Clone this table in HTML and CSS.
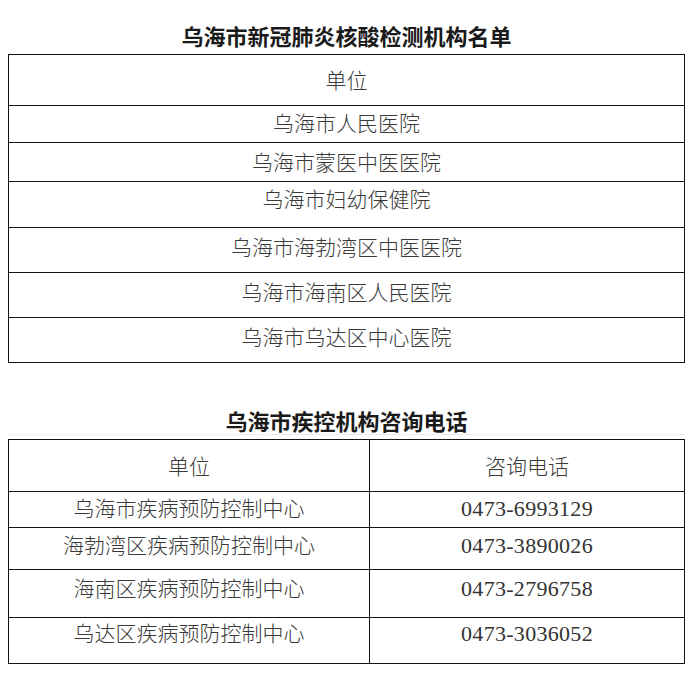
FILE: index.html
```html
<!DOCTYPE html>
<html lang="zh-CN">
<head>
<meta charset="utf-8">
<title>乌海市新冠肺炎核酸检测机构名单</title>
<link rel="stylesheet" href="styles.css">
</head>
<body>
<div class="page">
  <h2 class="title title-first">乌海市新冠肺炎核酸检测机构名单</h2>
  <div class="table">
    <div class="row r1-h"><div class="cell">单位</div></div>
    <div class="row r1-a"><div class="cell">乌海市人民医院</div></div>
    <div class="row r1-b"><div class="cell">乌海市蒙医中医医院</div></div>
    <div class="row r1-c"><div class="cell">乌海市妇幼保健院</div></div>
    <div class="row r1-d"><div class="cell">乌海市海勃湾区中医医院</div></div>
    <div class="row r1-d"><div class="cell">乌海市海南区人民医院</div></div>
    <div class="row r1-d"><div class="cell">乌海市乌达区中心医院</div></div>
  </div>

  <h2 class="title title-second">乌海市疾控机构咨询电话</h2>
  <div class="table">
    <div class="row two r2-h"><div class="cell left">单位</div><div class="cell">咨询电话</div></div>
    <div class="row two r2-a"><div class="cell left">乌海市疾病预防控制中心</div><div class="cell num">0473-6993129</div></div>
    <div class="row two r2-b"><div class="cell left">海勃湾区疾病预防控制中心</div><div class="cell num">0473-3890026</div></div>
    <div class="row two r2-c"><div class="cell left">海南区疾病预防控制中心</div><div class="cell num">0473-2796758</div></div>
    <div class="row two r2-d"><div class="cell left">乌达区疾病预防控制中心</div><div class="cell num">0473-3036052</div></div>
  </div>
</div>
</body>
</html>
```
FILE: styles.css
```css
html, body {
  margin: 0;
  padding: 0;
  background: #fff;
}
body {
  font-family: "Liberation Serif", "Noto Sans CJK SC", serif;
  color: #3a3a3a;
}
.page {
  width: 689px;
  box-sizing: border-box;
  padding: 24px 4px 0 8px;
}
.title {
  margin: 0;
  text-align: center;
  font-size: 22px;
  font-weight: 700;
  color: #1a1a1a;
}
.title-first {
  height: 28px;
  line-height: 28px;
  margin-bottom: 2px;
}
.title-second {
  margin-top: 46px;
  height: 22px;
  padding-top: 3px;
  line-height: 22px;
  border-bottom: 1px solid #eeeeee;
  margin-bottom: 4px;
}
.table {
  border-left: 1px solid #111;
  border-right: 1px solid #111;
  border-bottom: 1px solid #111;
}
.row {
  box-sizing: border-box;
  border-top: 1px solid #111;
  display: flex;
}
.row.two {
  display: grid;
  grid-template-columns: 361px 1fr;
}
.cell {
  flex: 1;
  text-align: center;
  font-size: 21px;
  font-weight: 300;
  line-height: 24px;
}
.cell.left {
  border-right: 1px solid #111;
}
.cell.num {
  font-size: 22px;
  font-weight: 400;
  color: #333;
  letter-spacing: 0.3px;
}
.r1-h { height: 51px; }
.r1-h .cell { padding-top: 14px; }
.r1-a { height: 37px; }
.r1-a .cell { padding-top: 6px; }
.r1-b { height: 39px; }
.r1-b .cell { padding-top: 8px; }
.r1-c { height: 46px; }
.r1-c .cell { padding-top: 6px; }
.r1-d { height: 45px; }
.r1-d .cell { padding-top: 8px; }

.r2-h { height: 52px; }
.r2-h .cell { padding-top: 15px; }
.r2-a { height: 36px; }
.r2-a .cell { padding-top: 5px; }
.r2-b { height: 42px; }
.r2-b .cell { padding-top: 6px; }
.r2-c { height: 48px; }
.r2-c .cell { padding-top: 7px; }
.r2-d { height: 46px; }
.r2-d .cell { padding-top: 4px; }
```
